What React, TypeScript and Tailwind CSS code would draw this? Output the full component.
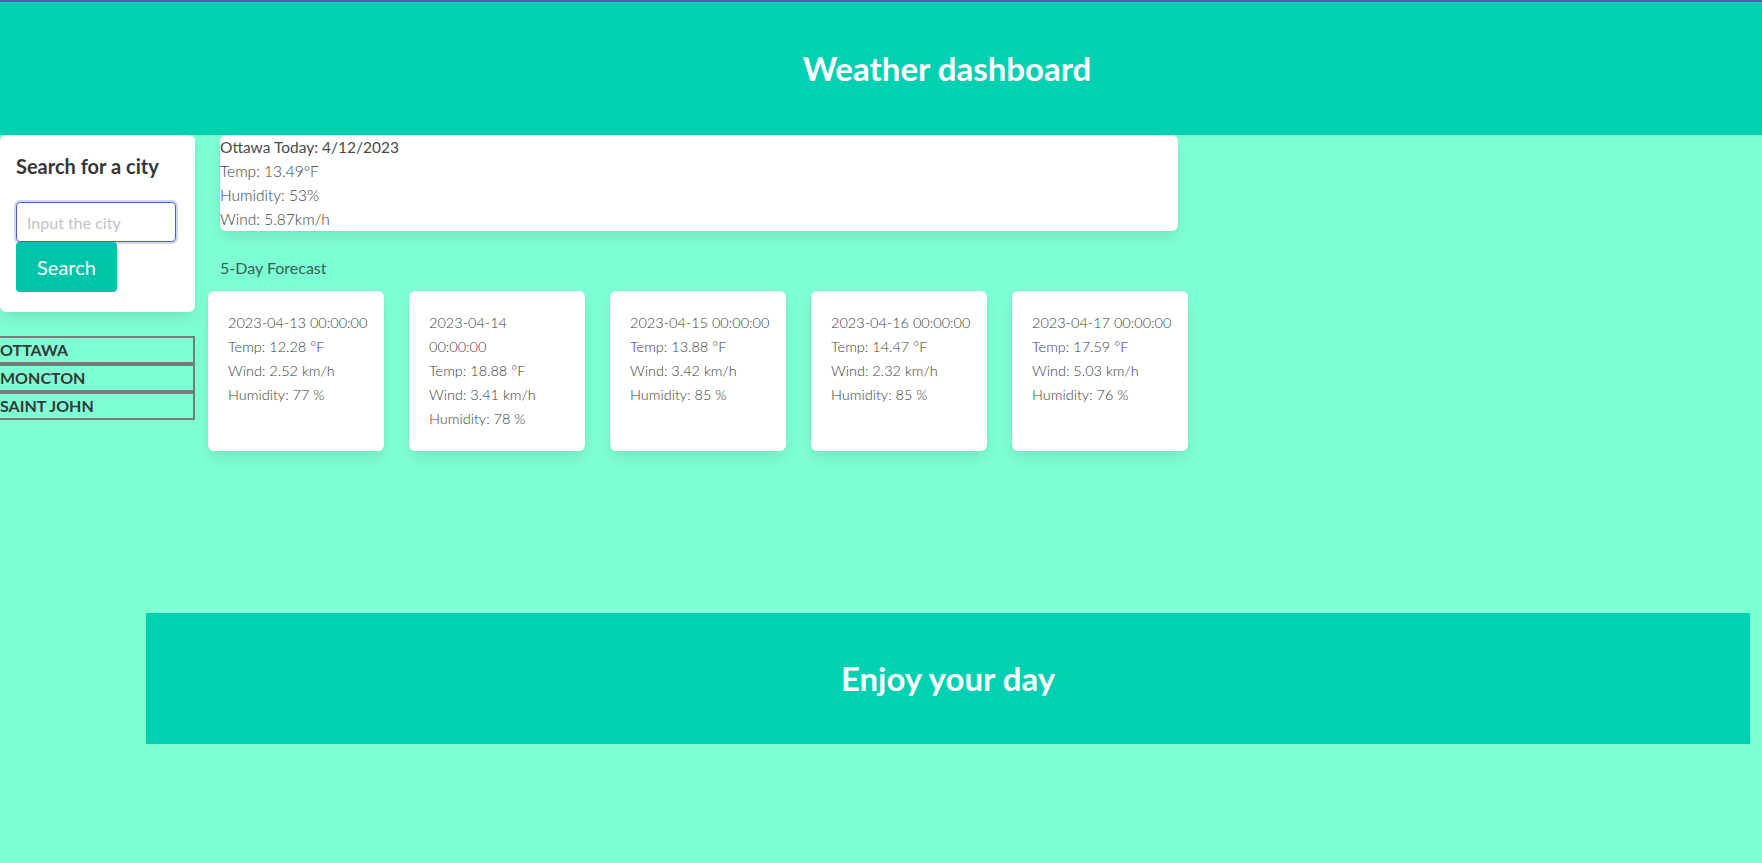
import React from "react";

const forecast = [
  { date: ["2023-04-13 00:00:00"], temp: "12.28", wind: "2.52", hum: "77" },
  { date: ["2023-04-14", "00:00:00"], temp: "18.88", wind: "3.41", hum: "78" },
  { date: ["2023-04-15 00:00:00"], temp: "13.88", wind: "3.42", hum: "85" },
  { date: ["2023-04-16 00:00:00"], temp: "14.47", wind: "2.32", hum: "85" },
  { date: ["2023-04-17 00:00:00"], temp: "17.59", wind: "5.03", hum: "76" },
];

const cities = ["OTTAWA", "MONCTON", "SAINT JOHN"];

const boxShadow =
  "shadow-[0_8px_16px_-2px_rgba(10,10,10,0.1),0_0_0_1px_rgba(10,10,10,0.02)]";

export default function App() {
  return (
    <div
      className="min-h-screen bg-[#7fffd4] text-[#4a4a4a]"
      style={{ fontFamily: "Lato, 'Open Sans', sans-serif" }}
    >
      {/* Header */}
      <header className="border-t-2 border-[#6950a8] bg-[#00d1b2] h-[135px] flex items-center justify-center pl-[132px]">
        <h1 className="text-[33px] font-bold text-white leading-none">
          Weather dashboard
        </h1>
      </header>

      <main className="flex items-start">
        {/* Search side */}
        <aside className="w-[195px] shrink-0">
          <div className={`bg-white rounded-[6px] ${boxShadow} px-4 pt-[19px] pb-[20px]`}>
            <h3 className="text-[20px] font-bold text-[#363636] leading-[25px]">
              Search for a city
            </h3>
            <input
              className="mt-[23px] block w-[160px] h-[40px] rounded-[4px] border border-[#485fc7] px-[10px] text-[16px] outline-none shadow-[0_0_0_2px_rgba(72,95,199,0.25)] placeholder:text-[#c2c2c2]"
              placeholder="Input the city"
            />
            <button className="block w-[101px] h-[50px] rounded-[4px] bg-[#00c4a7] text-white text-[20px]">
              Search
            </button>
          </div>
          <div className="mt-[24px] -ml-[3px] flex flex-col">
            {cities.map((c) => (
              <button
                key={c}
                className="h-[28px] w-[198px] border-2 border-[#7a7a7a] pl-[1px] text-left font-bold text-[16px] text-[#363636] leading-none"
              >
                {c}
              </button>
            ))}
          </div>
        </aside>

        {/* Weather */}
        <section className="w-[982px] ml-[13px]">
          <div className={`mx-3 bg-white rounded-[6px] ${boxShadow} text-[15.5px] leading-6`}>
            <p className="text-[#4a4a4a]">Ottawa Today: 4/12/2023</p>
            <p className="font-light text-[#3d3d3d]">Temp: 13.49°F</p>
            <p className="font-light text-[#3d3d3d]">Humidity: 53%</p>
            <p className="font-light text-[#3d3d3d]">Wind: 5.87km/h</p>
          </div>
          <p className="mx-3 mt-[25px] text-[16px] leading-6 text-[#2f5f52]">5-Day Forecast</p>
          <div className="mt-[11px] flex gap-[25px]">
            {forecast.map((f) => (
              <div
                key={f.date.join()}
                className={`w-[176px] bg-white rounded-[6px] ${boxShadow} p-5 text-[14.5px] leading-6 font-light text-[#3d3d3d] whitespace-nowrap`}
              >
                {f.date.map((d) => (
                  <p key={d}>{d}</p>
                ))}
                <p>Temp: {f.temp} °F</p>
                <p>Wind: {f.wind} km/h</p>
                <p>Humidity: {f.hum} %</p>
              </div>
            ))}
          </div>
        </section>
      </main>

      {/* Footer */}
      <footer className="mt-[162px] ml-[146px] w-[1604px] h-[131px] bg-[#00d1b2] flex items-center justify-center">
        <h2 className="text-[33px] font-bold text-white leading-none">Enjoy your day</h2>
      </footer>
    </div>
  );
}
